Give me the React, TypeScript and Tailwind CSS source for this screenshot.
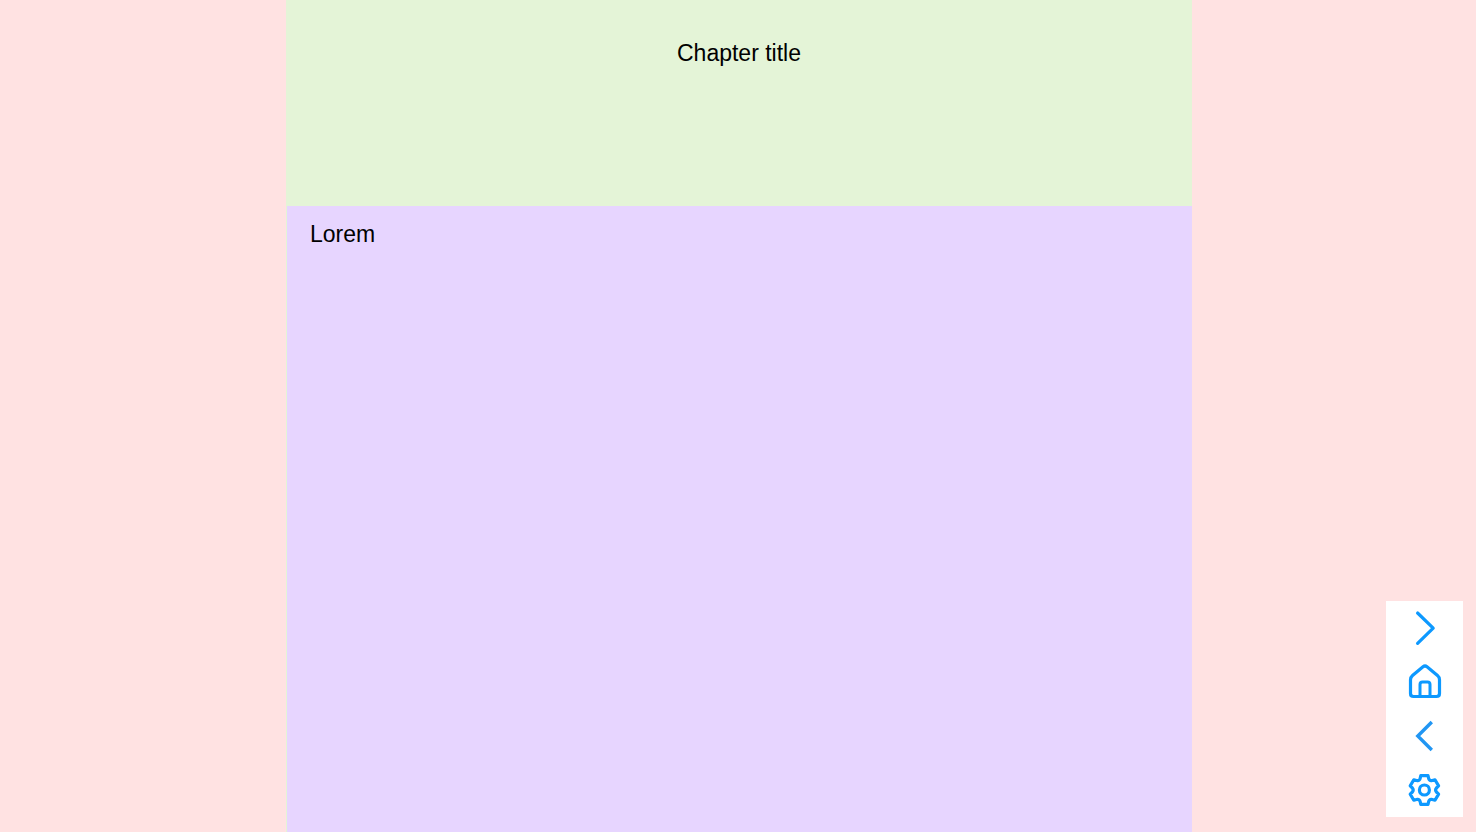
import type { ReactNode } from "react";

function IconFrame({ children }: { children: ReactNode }) {
  return (
    <svg
      viewBox="0 0 40 40"
      className="size-10"
      fill="none"
      stroke="currentColor"
      strokeWidth="3"
      aria-hidden="true"
    >
      {children}
    </svg>
  );
}

function NavButton({ label, children }: { label: string; children: ReactNode }) {
  return (
    <button
      type="button"
      aria-label={label}
      className="flex h-[54px] w-full cursor-pointer items-center justify-center text-[#0d99ff]"
    >
      <IconFrame>{children}</IconFrame>
    </button>
  );
}

export default function App() {
  return (
    <div className="grid min-h-screen grid-cols-[286fr_906fr_284fr] bg-[#ffe2e2] font-['Liberation_Sans',Arial,sans-serif] text-[23px] leading-7 text-black">
      <main className="col-start-2 flex flex-col bg-[#e4f4d7]">
        <header className="h-[206px] pt-[39px] text-center">
          <h1>Chapter title</h1>
        </header>
        <article className="ml-px flex-1 bg-[#e7d5ff] px-[23px] pt-[14px]">
          <p>Lorem</p>
        </article>
      </main>

      <nav
        aria-label="Reader controls"
        className="fixed right-[13px] bottom-[15px] w-[77px] bg-white"
      >
        <NavButton label="Next chapter">
          <path
            d="M12.6 5 L28.2 20.2 L12.6 35.4"
            strokeWidth="3.2"
            strokeLinecap="round"
            strokeLinejoin="round"
          />
        </NavButton>
        <NavButton label="Home">
          <path
            strokeWidth="3.2"
            d="M5.5 17.8 Q5.5 15.2 7.5 13.5 L18 4.8 Q20 3.2 22 4.8 L32.5 13.5 Q34.5 15.2 34.5 17.8 V31.5 Q34.5 34.5 31.5 34.5 H8.5 Q5.5 34.5 5.5 31.5 Z"
          />
          <path d="M15 34.5 V22.5 Q15 20 17.5 20 H22.5 Q25 20 25 22.5 V34.5" />
        </NavButton>
        <NavButton label="Previous chapter">
          <path d="M26.8 6 L12.8 20 L26.8 34" stroke="#2196f3" strokeWidth="3.4" />
        </NavButton>
        <NavButton label="Settings">
          <g transform="translate(19.4 20)" strokeWidth="3.2" strokeLinejoin="round">
            <path d="M-3.6-14.3H3.6L4.3-11.4Q4.8-9.5 6.9-9.3L10.6-10.2L14.2-4.1L12-2Q10.4 0 12 2L14.2 4.1L10.6 10.2L6.9 9.3Q4.8 9.5 4.3 11.4L3.6 14.3H-3.6L-4.3 11.4Q-4.8 9.5-6.9 9.3L-10.6 10.2L-14.2 4.1L-12 2Q-10.4 0-12-2L-14.2-4.1L-10.6-10.2L-6.9-9.3Q-4.8-9.5-4.3-11.4Z" />
            <circle r="5" />
          </g>
        </NavButton>
      </nav>
    </div>
  );
}
